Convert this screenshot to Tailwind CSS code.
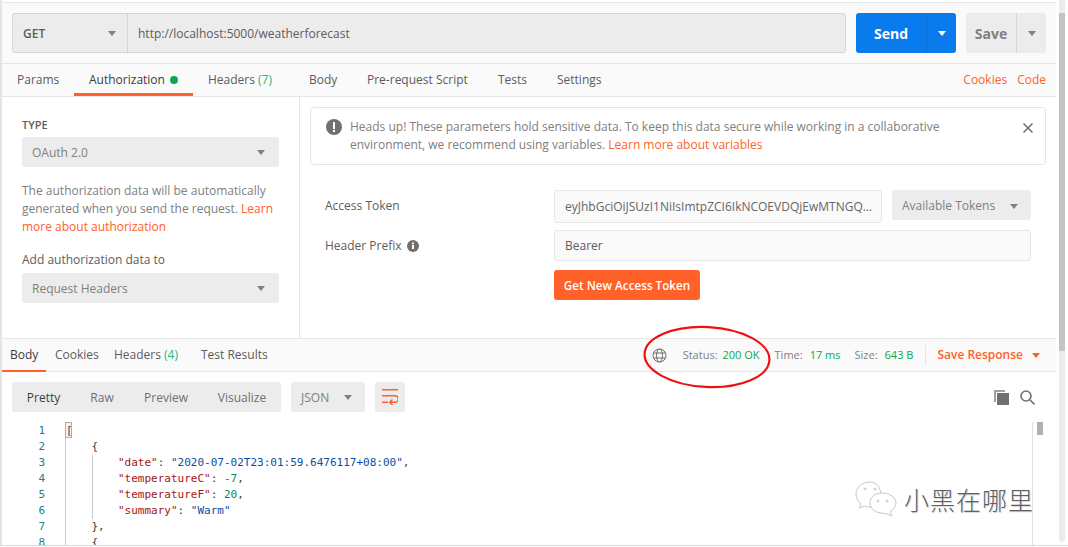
<!DOCTYPE html>
<html lang="en">

<head>
    <meta charset="UTF-8">
    <title>Postman</title>
    <script src="https://cdn.jsdelivr.net/npm/@tailwindcss/browser@4"></script>
</head>

<body class="bg-white h-[547px] w-[1068px] overflow-hidden relative font-['Open_Sans',sans-serif] text-[12px] text-[#5c5c5c]">

    <div class="flex h-[545px] border-b border-[#d8d8d8] box-content">
        <div class="w-[2px] bg-[#e4e4e4]"></div>

        <!-- main panel -->
        <div class="w-[1054px] flex flex-col">
            <!-- url bar -->
            <div class="h-[62px] mt-[2px] bg-[#fafafa] border-y border-[#e6e6e6] pt-[10px] flex items-start pl-[10px] pr-[10px]">
                <div class="flex flex-1 h-[40px] bg-[#ececec] border border-[#d4d4d4] rounded-[3px]">
                    <div class="w-[115px] flex items-center justify-between pt-px pl-[10px] pr-[11px] border-r border-[#d4d4d4] font-semibold text-[#5c5c5c]">
                        GET
                        <span class="w-0 h-0 border-x-[4px] border-x-transparent border-t-[5px] border-t-[#808080]"></span>
                    </div>
                    <div class="flex items-center pt-px pl-[10px]">http://localhost:5000/weatherforecast</div>
                </div>
                <div class="flex h-[40px] w-[100px] ml-[10px] bg-[#097bed] rounded-[3px] text-white">
                    <div class="flex-1 flex items-center justify-center font-bold text-[14px]">Send</div>
                    <div class="w-[30px] flex items-center justify-center border-l border-[#0a6fd4]">
                        <span class="w-0 h-0 border-x-[4px] border-x-transparent border-t-[5px] border-t-white"></span>
                    </div>
                </div>
                <div class="flex h-[40px] w-[80px] ml-[10px] bg-[#ececec] rounded-[3px] text-[#808080]">
                    <div class="flex-1 flex items-center justify-center font-bold text-[14px]">Save</div>
                    <div class="w-[30px] flex items-center justify-center border-l border-[#d4d4d4]">
                        <span class="w-0 h-0 border-x-[4px] border-x-transparent border-t-[5px] border-t-[#808080]"></span>
                    </div>
                </div>
            </div>

            <!-- request tabs -->
            <div class="h-[33px] bg-[#fafafa] border-b border-[#e6e6e6] flex items-stretch pr-[10px]">
                <div class="w-[72px] pl-[15px] flex items-center">Params</div>
                <div class="w-[119px] flex items-center justify-center gap-[5px] border-b-[3px] border-[#ff6128] pt-[3px] text-[#3c3c3c]">
                    Authorization
                    <span class="w-[8px] h-[8px] rounded-full bg-[#0ca750]"></span>
                </div>
                <div class="w-[116px] pl-[15px] flex items-center">Headers&nbsp;<span class="text-[#26b47f]">(7)</span></div>
                <div class="w-[58px] flex items-center">Body</div>
                <div class="w-[131px] flex items-center">Pre-request Script</div>
                <div class="w-[59px] flex items-center">Tests</div>
                <div class="flex items-center">Settings</div>
                <div class="ml-auto flex items-center gap-[10px] text-[#ff6128]">
                    <span>Cookies</span>
                    <span>Code</span>
                </div>
            </div>

            <!-- auth panel -->
            <div class="flex h-[242px] border-b border-[#e6e6e6]">
                <div class="w-[298px] border-r border-[#e6e6e6] pl-[20px] pr-[20px] pt-[20px] shrink-0">
                    <div class="text-[11px] leading-[16px] font-semibold">TYPE</div>
                    <div class="mt-[4px] h-[30px] pt-px bg-[#ececec] rounded-[3px] flex items-center justify-between pl-[10px] pr-[14px] text-[#808080]">
                        OAuth 2.0
                        <span class="w-0 h-0 border-x-[4px] border-x-transparent border-t-[5px] border-t-[#808080]"></span>
                    </div>
                    <p class="mt-[15px] leading-[18px] text-[#808080]">The authorization data will be automatically generated when you send the request. <span class="text-[#ff6128]">Learn more about authorization</span></p>
                    <div class="mt-[15px] leading-[18px]">Add authorization data to</div>
                    <div class="mt-[4px] h-[30px] pt-px bg-[#ececec] rounded-[3px] flex items-center justify-between pl-[10px] pr-[14px] text-[#808080]">
                        Request Headers
                        <span class="w-0 h-0 border-x-[4px] border-x-transparent border-t-[5px] border-t-[#808080]"></span>
                    </div>
                </div>

                <div class="flex-1 pt-[10px] pl-[10px] pr-[10px]">
                    <div class="h-[58px] border border-[#e6e6e6] rounded-[3px] flex items-start pl-[15px] pr-[12px] pt-[10px]">
                        <svg class="w-[16px] h-[16px] mt-[1px] shrink-0" viewBox="0 0 16 16">
                            <circle cx="8" cy="8" r="8" fill="#707070" />
                            <rect x="7" y="3" width="2" height="7" fill="#fff" />
                            <rect x="7" y="11" width="2" height="2" fill="#fff" />
                        </svg>
                        <p class="ml-[8px] leading-[18px] text-[#808080] w-[640px] shrink-0">Heads up! These parameters hold sensitive data. To keep this data secure while working in a collaborative environment, we recommend using variables. <span class="text-[#ff6128]">Learn more about variables</span></p>
                        <svg class="w-[10px] h-[10px] ml-auto mt-[5px] shrink-0" viewBox="0 0 10 10" fill="none" stroke="#707070" stroke-width="1.5">
                            <path d="M0.5 0.5 L9.5 9.5 M9.5 0.5 L0.5 9.5" />
                        </svg>
                    </div>

                    <div class="mt-[25px] flex items-start pl-[15px]">
                        <div class="w-[229px] leading-[32px]">Access Token</div>
                        <div class="w-[328px] h-[33px] bg-[#fafafa] border border-[#e6e6e6] rounded-[3px] flex items-center pl-[10px] pr-[7px] overflow-hidden">
                            <span class="truncate text-[#666666]">eyJhbGciOiJSUzI1NiIsImtpZCI6IkNCOEVDQjEwMTNGQzM0</span>
                        </div>
                        <div class="w-[139px] h-[30px] pt-[2px] ml-[10px] bg-[#ececec] rounded-[3px] flex items-center justify-between pl-[10px] pr-[13px] text-[#808080]">
                            Available Tokens
                            <span class="w-0 h-0 border-x-[4px] border-x-transparent border-t-[5px] border-t-[#808080]"></span>
                        </div>
                    </div>
                    <div class="mt-[7px] flex items-center pl-[15px] h-[31px]">
                        <div class="w-[229px] flex items-center gap-[5px]">
                            Header Prefix
                            <svg class="w-[12px] h-[12px]" viewBox="0 0 12 12">
                                <circle cx="6" cy="6" r="6" fill="#707070" />
                                <rect x="5" y="5" width="2" height="4" fill="#fff" />
                                <rect x="5" y="2.6" width="2" height="1.6" fill="#fff" />
                            </svg>
                        </div>
                        <div class="w-[477px] h-[31px] bg-[#fafafa] border border-[#e6e6e6] rounded-[3px] flex items-center pl-[10px]">Bearer</div>
                    </div>
                    <div class="mt-[9px] ml-[244px] w-[146px] h-[30px] pt-px bg-[#ff6128] rounded-[3px] text-white font-semibold text-[11.7px] flex items-center justify-center">Get New Access Token</div>
                </div>
            </div>

            <!-- response tabs -->
            <div class="h-[33px] bg-[#fafafa] border-b border-[#e6e6e6] flex items-stretch relative pr-[16px]">
                <div class="w-[53px] pl-[8px] text-[#3c3c3c] flex items-center">Body</div>
                <div class="w-[59px] flex items-center">Cookies</div>
                <div class="w-[87px] flex items-center">Headers&nbsp;<span class="text-[#26b47f]">(4)</span></div>
                <div class="flex items-center">Test Results</div>
                <div class="ml-auto flex items-center">
                    <svg class="w-[15px] h-[15px] mr-[16px]" viewBox="0 0 15 15" fill="none" stroke="#707070" stroke-width="1">
                        <circle cx="7.5" cy="7.5" r="6.5" />
                        <ellipse cx="7.5" cy="7.5" rx="3" ry="6.5" />
                        <path d="M1.5 5 H13.5 M1.5 10 H13.5" />
                    </svg>
                    <span class="text-[#808080] text-[11px]">Status:</span>
                    <span class="text-[#0ca750] text-[11px] ml-[5px]">200 OK</span>
                    <span class="text-[#808080] text-[11px] ml-[15px]">Time:</span>
                    <span class="text-[#0ca750] text-[11px] ml-[7px]">17 ms</span>
                    <span class="text-[#808080] text-[11px] ml-[14px]">Size:</span>
                    <span class="text-[#0ca750] text-[11px] ml-[7px]">643 B</span>
                    <span class="w-px h-[20px] bg-[#e6e6e6] ml-[12px]"></span>
                    <span class="text-[#ff6128] font-semibold ml-[11px]">Save Response</span>
                    <span class="w-0 h-0 ml-[9px] border-x-[4px] border-x-transparent border-t-[5px] border-t-[#ff6128]"></span>
                </div>
                <span class="absolute left-0 bottom-[-1px] w-[44px] h-[2px] bg-[#ff6128]"></span>
            </div>

            <!-- response toolbar -->
            <div class="flex items-center h-[30px] mt-[10px] mb-[10px] pl-[10px] pr-[21px] shrink-0">
                <div class="flex items-center w-[269px] h-[30px] pt-px bg-[#ececec] rounded-[3px]">
                    <span class="w-[63px] text-center text-[#3c3c3c]">Pretty</span>
                    <span class="w-[54px] text-center text-[#707070]">Raw</span>
                    <span class="w-[74px] text-center text-[#707070]">Preview</span>
                    <span class="w-[78px] text-center text-[#707070]">Visualize</span>
                </div>
                <div class="w-[74px] h-[30px] pt-px ml-[10px] bg-[#ececec] rounded-[3px] flex items-center justify-between pl-[10px] pr-[13px] text-[#808080]">
                    JSON
                    <span class="w-0 h-0 border-x-[4px] border-x-transparent border-t-[5px] border-t-[#808080]"></span>
                </div>
                <div class="w-[30px] h-[30px] ml-[10px] bg-[#ececec] rounded-[3px] flex items-center justify-center">
                    <svg class="w-[16px] h-[16px]" viewBox="0 0 16 16" fill="none" stroke="#ff6128" stroke-width="1.5">
                        <path d="M0 0.75 H16 M0 6.75 H13 A3.25 3.25 0 0 1 13 13.25 H8 M0 13.25 H6 M10.5 10.5 L7.75 13.25 L10.5 16" />
                    </svg>
                </div>
                <svg class="w-[15px] h-[15px] ml-auto" viewBox="0 0 15 15" fill="#707070">
                    <path d="M0 0 H11 V2 H2 V12 H0 Z" fill="#a0a0a0" />
                    <rect x="3" y="3" width="12" height="12" />
                </svg>
                <svg class="w-[15px] h-[15px] ml-[11px]" viewBox="0 0 15 15" fill="none" stroke="#707070" stroke-width="1.6">
                    <circle cx="6" cy="6" r="5" />
                    <path d="M9.8 9.8 L14.5 14.5" />
                </svg>
            </div>

            <!-- response code -->
            <div class="flex flex-1 min-h-0 overflow-hidden font-['DejaVu_Sans_Mono',monospace] text-[11px] leading-[16px] pr-[14px]">
                <div class="w-[43px] pt-px text-right text-[#237893] shrink-0">
                    <div>1</div><div>2</div><div>3</div><div>4</div><div>5</div><div>6</div><div>7</div><div>8</div>
                </div>
                <div class="ml-[20px] pt-px flex-1 text-[#3c3c3c] shadow-[inset_1px_0_0_#c8c8c8]">
                    <div class="-mt-px h-[17px]"><span class="inline-block w-[7px] h-[16px] leading-[15px] text-center bg-[#f4f4f4] border border-[#b0b0b0]">[</span></div>
                    <div class="pl-[26.5px]">{</div>
                    <div class="ml-[26.5px] pl-[26.5px] shadow-[inset_1px_0_0_#c8c8c8]">
                        <div><span class="text-[#a31515]">"date"</span>: <span class="text-[#0451a5]">"2020-07-02T23:01:59.6476117+08:00"</span>,</div>
                        <div><span class="text-[#a31515]">"temperatureC"</span>: <span class="text-[#09885a]">-7</span>,</div>
                        <div><span class="text-[#a31515]">"temperatureF"</span>: <span class="text-[#09885a]">20</span>,</div>
                        <div><span class="text-[#a31515]">"summary"</span>: <span class="text-[#0451a5]">"Warm"</span></div>
                    </div>
                    <div class="pl-[26.5px]">},</div>
                    <div class="pl-[26.5px]">{</div>
                </div>
                <div class="w-[10px] border-l border-[#e0e0e0] relative shrink-0">
                    <span class="absolute left-[4px] top-0 w-[6px] h-[13px] bg-[#b0b0b0]"></span>
                </div>
            </div>
        </div>

        <!-- page scrollbar -->
        <div class="w-[6px] ml-[3px] h-[542px] rounded-b-[3px] bg-[#ececec] shrink-0">
            <div class="mt-[13px] h-[338px] bg-[#c4c4c4]"></div>
        </div>
    </div>

    <!-- annotation drawn on top of the screenshot -->
    <svg class="absolute left-[640px] top-[322px] w-[135px] h-[75px]" viewBox="0 0 135 75" fill="none">
        <ellipse cx="67" cy="35" rx="62.5" ry="30" stroke="#f01010" stroke-width="2.2" transform="rotate(3 67 35)" />
    </svg>

    <!-- watermark -->
    <div class="absolute left-[855px] top-[481px] flex items-center">
        <svg class="w-[42px] h-[36px]" viewBox="0 0 42 36" fill="#fff" stroke="#b8b8b8" stroke-width="0.8">
            <path d="M15 1 C6 1 1 7 1 13 C1 18 4 21 6 23 L4 27 L10 25 C12 26 14 26 16 26 C28 26 30 1 15 1 Z" />
            <path d="M27 12 C19 12 15 17 15 22 C15 28 21 32 27 32 L32 33 L37 35 L35 31 C39 28 41 25 41 22 C41 17 35 12 27 12 Z" />
            <circle cx="10" cy="8" r="1" />
            <circle cx="20" cy="8" r="1" />
            <circle cx="23" cy="20" r="1" />
            <circle cx="32" cy="20" r="1" />
        </svg>
        <span class="ml-[7px] font-['Noto_Sans_CJK_SC',sans-serif] font-light text-[25px] leading-[36px] text-[#606060] tracking-[1px] [text-shadow:1px_1px_0_#dddddd]">小黑在哪里</span>
    </div>

</body>

</html>
